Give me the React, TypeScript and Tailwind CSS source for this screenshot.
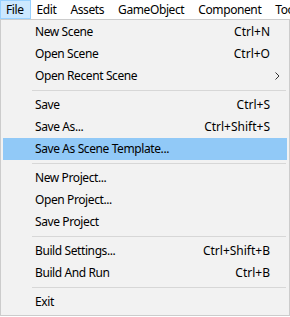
import React from "react";

type Item =
  | { type: "item"; label: string; shortcut?: string; submenu?: boolean; active?: boolean }
  | { type: "sep" };

const items: Item[] = [
  { type: "item", label: "New Scene", shortcut: "Ctrl+N" },
  { type: "item", label: "Open Scene", shortcut: "Ctrl+O" },
  { type: "item", label: "Open Recent Scene", submenu: true },
  { type: "sep" },
  { type: "item", label: "Save", shortcut: "Ctrl+S" },
  { type: "item", label: "Save As...", shortcut: "Ctrl+Shift+S" },
  { type: "item", label: "Save As Scene Template...", active: true },
  { type: "sep" },
  { type: "item", label: "New Project..." },
  { type: "item", label: "Open Project..." },
  { type: "item", label: "Save Project" },
  { type: "sep" },
  { type: "item", label: "Build Settings...", shortcut: "Ctrl+Shift+B" },
  { type: "item", label: "Build And Run", shortcut: "Ctrl+B" },
  { type: "sep" },
  { type: "item", label: "Exit" },
];

const menus = ["File", "Edit", "Assets", "GameObject", "Component", "Tools"];

export default function App() {
  return (
    <div
      className="w-[290px] h-[317px] bg-white overflow-hidden text-[12px] text-black"
      style={{ fontFamily: '"Noto Sans", "Liberation Sans", sans-serif' }}
    >
      <div className="flex h-[19px] items-center whitespace-nowrap tracking-[-0.4px]">
        {menus.map((m, i) => (
          <div
            key={m}
            className={
              i === 0
                ? "h-[19px] flex items-center pl-[5px] pr-[6px] bg-[#cce8ff] border border-[#99d1ff]"
                : i === 1
                ? "h-[19px] flex items-center px-[7px] ml-[-1px]"
                : "h-[19px] flex items-center px-[7px]"
            }
          >
            {m}
          </div>
        ))}
      </div>
      <div className="w-[290px] h-[297px] bg-[#f2f2f2] border border-[#cccccc] py-[1px] px-[2px]">
        {items.map((it, idx) =>
          it.type === "sep" ? (
            <div key={idx} className="h-[7px] pt-[3px] pl-[29px] pr-[1px]">
              <div className="h-[1px] bg-[#d7d7d7]" />
            </div>
          ) : (
            <div
              key={idx}
              className={
                "h-[22px] flex items-center pl-[32px] pr-[17px] " +
                (it.active ? "bg-[#91c9f7]" : "")
              }
            >
              <span className="flex-1 whitespace-nowrap tracking-[-0.4px]">{it.label}</span>
              {it.shortcut && <span className="whitespace-nowrap">{it.shortcut}</span>}
              {it.submenu && (
                <svg width="5" height="8" viewBox="0 0 5 8" className="mr-[-10px]">
                  <path d="M0.5 0.5 L4 4 L0.5 7.5" fill="none" stroke="#333" strokeWidth="1" />
                </svg>
              )}
            </div>
          )
        )}
      </div>
    </div>
  );
}
